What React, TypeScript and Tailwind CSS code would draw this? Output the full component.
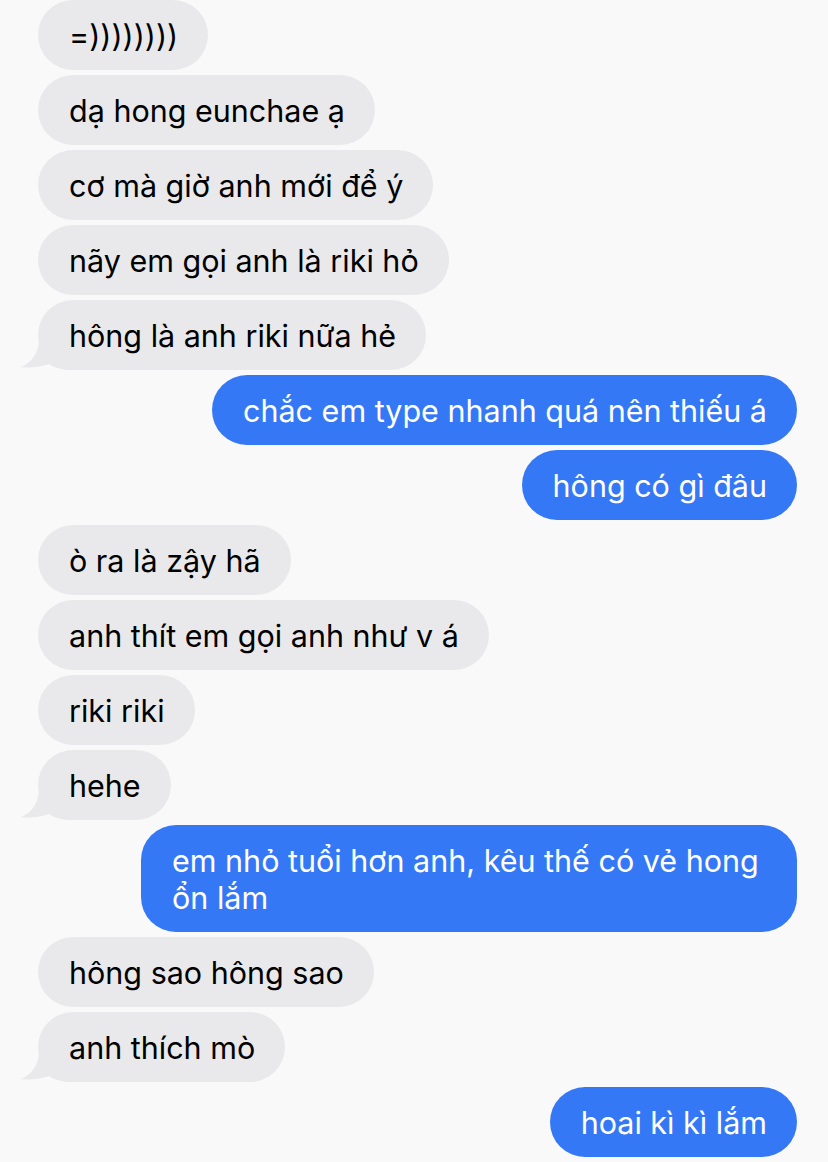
import React from "react";

type Msg = { text: string; me?: boolean; tail?: boolean };

const msgs: Msg[] = [
  { text: "=))))))))" },
  { text: "dạ hong eunchae ạ" },
  { text: "cơ mà giờ anh mới để ý" },
  { text: "nãy em gọi anh là riki hỏ" },
  { text: "hông là anh riki nữa hẻ", tail: true },
  { text: "chắc em type nhanh quá nên thiếu á", me: true },
  { text: "hông có gì đâu", me: true },
  { text: "ò ra là zậy hã" },
  { text: "anh thít em gọi anh như v á" },
  { text: "riki riki" },
  { text: "hehe", tail: true },
  { text: "em nhỏ tuổi hơn anh, kêu thế có vẻ hong ổn lắm", me: true },
  { text: "hông sao hông sao" },
  { text: "anh thích mò", tail: true },
  { text: "hoai kì kì lắm", me: true },
];

function Tail() {
  return (
    <svg
      className="absolute bottom-0 left-[-17px]"
      width="52"
      height="32"
      viewBox="0 0 52 32"
    >
      <path
        d="M18 0 C18 16 10 25 0 29 C10 30.5 20 29 28 26 C34 30 42 32 52 32 L52 0 Z"
        fill="#e9e9eb"
      />
    </svg>
  );
}

export default function App() {
  return (
    <div
      className="min-h-[1162px] w-[828px] bg-[#f9f9f9] overflow-hidden"
      style={{ fontFamily: "Inter, 'Noto Sans', sans-serif" }}
    >
      <div className="flex flex-col gap-[5px] pr-[31px] pl-[38px]">
        {msgs.map((m, i) =>
          m.me ? (
            <div key={i} className="flex justify-end">
              <div className="max-w-[656px] rounded-[35px] bg-[#3478f6] pl-[31px] pr-[30px] pt-[17px] pb-[16px] text-[30.5px] leading-[37px] text-white">
                {m.text}
              </div>
            </div>
          ) : (
            <div key={i} className="flex justify-start">
              <div className="relative max-w-[656px] rounded-[35px] bg-[#e9e9eb] pl-[31px] pr-[30px] pt-[17px] pb-[16px] text-[30.5px] leading-[37px] text-black">
                {m.tail && <Tail />}
                <span className="relative">{m.text}</span>
              </div>
            </div>
          )
        )}
      </div>
    </div>
  );
}
